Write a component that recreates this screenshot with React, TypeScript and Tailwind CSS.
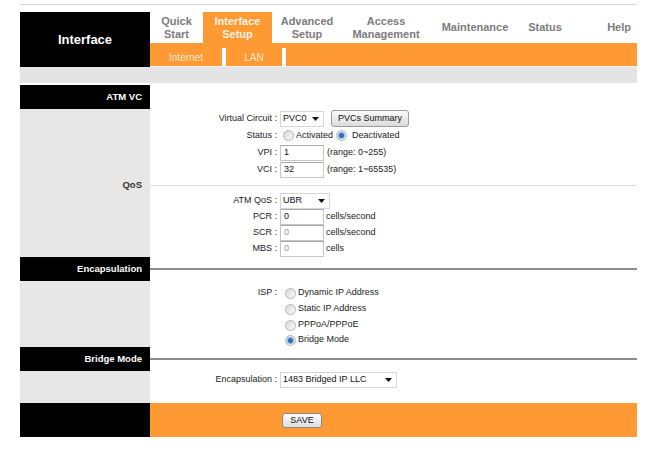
import React from 'react'

const font = "font-['Liberation_Sans',Arial,sans-serif]"

function Arrow() {
    return (
        <svg width="7" height="4" viewBox="0 0 7 4" className="shrink-0">
            <path d="M0 0 L7 0 L3.5 4 Z" fill="#111" />
        </svg>
    )
}

function Select({ value, width }: { value: string; width: string }) {
    return (
        <div className={`flex items-center justify-between h-[16px] ${width} border border-[#d6d6d6] bg-white pl-[2px] pr-[4px] text-[#111]`}>
            <span>{value}</span>
            <Arrow />
        </div>
    )
}

function Input({ value, muted }: { value: string; muted?: boolean }) {
    return (
        <div className={`flex items-center h-[16px] w-[44px] border border-[#c6c6c6] border-t-[#a8a8a8] bg-white pl-[3px] ${muted ? 'text-[#9a9a9a]' : 'text-[#111]'}`}>
            {value}
        </div>
    )
}

function Radio({ checked }: { checked?: boolean }) {
    return (
        <span className="flex items-center justify-center w-[11px] h-[11px] rounded-full border border-[#b4b4b4] bg-gradient-to-br from-[#d8d8d8] to-[#fafafa] shrink-0">
            {checked && <span className="w-[5px] h-[5px] rounded-full bg-[#2f6fc0] ring-1 ring-[#8fb6e6]" />}
        </span>
    )
}

function Label({ children }: { children: React.ReactNode }) {
    return <div className="w-[127px] text-right text-[#222] mr-[3px]">{children}</div>
}

function Row({ h, children }: { h: string; children: React.ReactNode }) {
    return <div className={`flex items-center ${h}`}>{children}</div>
}

function SectionHead({ title, line }: { title: string; line?: boolean }) {
    return (
        <div className="flex h-[24px]">
            <div className="w-[130px] bg-black text-white font-bold text-[9.5px] flex items-center justify-end pr-[8px]">
                {title}
            </div>
            <div className="flex-1 flex items-center">
                {line && <div className="w-full h-[2px] bg-[#8c8c8c]" />}
            </div>
        </div>
    )
}

const tabs = [
    { w: 'w-[53px]', label: ['Quick', 'Start'] },
    { w: 'w-[69px]', label: ['Interface', 'Setup'], active: true },
    { w: 'w-[70px]', label: ['Advanced', 'Setup'] },
    { w: 'w-[88px]', label: ['Access', 'Management'] },
    { w: 'w-[90px]', label: ['Maintenance'] },
    { w: 'w-[50px]', label: ['Status'] },
]

export default function App() {
    return (
        <div className={`${font} w-[659px] h-[450px] bg-white text-[9px] overflow-hidden`}>
            <div className="ml-[20px] w-[617px]">

                {/* top rule */}
                <div className="mt-[4px] h-px bg-[#d4d4d4]" />

                {/* header */}
                <div className="flex h-[55px] mt-[7px]">
                    <div className="w-[130px] bg-black text-white font-bold text-[13px] flex items-center justify-center">
                        Interface
                    </div>
                    <div className="flex-1 flex flex-col">
                        <div className="flex h-[31px]">
                            {tabs.map((t) => (
                                <div
                                    key={t.label.join(' ')}
                                    className={`${t.w} flex flex-col items-center justify-center text-center leading-[13px] font-bold text-[11px] ${t.active ? 'bg-[#ff9933] text-[#fff3e6]' : 'text-[#7c7c7c]'}`}
                                >
                                    {t.label.map((l) => (
                                        <span key={l}>{l}</span>
                                    ))}
                                </div>
                            ))}
                            <div className="flex-1 flex items-center justify-end pr-[6px] font-bold text-[11px] text-[#7c7c7c]">
                                Help
                            </div>
                        </div>
                        <div className="flex items-end h-[23px] bg-[#ff9933] text-[10px] text-[#ffe8d0]">
                            <div className="w-[72px] h-[18px] flex items-center justify-center">Internet</div>
                            <div className="w-[4px] h-[18px] bg-white" />
                            <div className="w-[56px] h-[18px] flex items-center justify-center">LAN</div>
                            <div className="w-[4px] h-[18px] bg-white" />
                        </div>
                        <div className="h-px bg-[#f4f4f4]" />
                    </div>
                </div>

                {/* grey band */}
                <div className="h-[16px] bg-[#e4e4e4]" />

                <div className="mt-[2px]">
                    <SectionHead title="ATM VC" />

                    {/* ATM VC fields */}
                    <div className="flex">
                        <div className="w-[130px] bg-[#e7e7e7]" />
                        <div className="flex-1 pt-[1px]">
                            <Row h="h-[17px]">
                                <Label>Virtual Circuit :</Label>
                                <Select value="PVC0" width="w-[44px]" />
                                <div className="ml-[7px] h-[17px] w-[78px] flex items-center justify-center rounded-[3px] border border-[#9c9c9c] bg-gradient-to-b from-[#fbfbfb] to-[#dcdcdc] text-[#111]">
                                    PVCs Summary
                                </div>
                            </Row>
                            <Row h="h-[17px]">
                                <Label>Status :</Label>
                                <div className="flex items-center ml-[3px]">
                                    <Radio />
                                    <span className="ml-[2px] text-[#222]">Activated</span>
                                    <span className="ml-[3px]"><Radio checked /></span>
                                    <span className="ml-[5px] text-[#222]">Deactivated</span>
                                </div>
                            </Row>
                            <Row h="h-[17px]">
                                <Label>VPI :</Label>
                                <Input value="1" />
                                <span className="ml-[3px] text-[#222]">(range: 0~255)</span>
                            </Row>
                            <Row h="h-[17px]">
                                <Label>VCI :</Label>
                                <Input value="32" />
                                <span className="ml-[3px] text-[#222]">(range: 1~65535)</span>
                            </Row>
                        </div>
                    </div>

                    {/* QoS */}
                    <div className="flex h-[14px]">
                        <div className="w-[130px] bg-[#e7e7e7] flex items-center justify-end pr-[8px] font-bold text-[9.5px] text-[#333]">
                            QoS
                        </div>
                        <div className="flex-1 flex items-center">
                            <div className="w-full h-px bg-[#dddddd]" />
                        </div>
                    </div>
                    <div className="flex">
                        <div className="w-[130px] bg-[#e7e7e7]" />
                        <div className="flex-1 pt-[1px]">
                            <Row h="h-[16px]">
                                <Label>ATM QoS :</Label>
                                <Select value="UBR" width="w-[50px]" />
                            </Row>
                            <Row h="h-[16px]">
                                <Label>PCR :</Label>
                                <Input value="0" />
                                <span className="ml-[2px] text-[#222]">cells/second</span>
                            </Row>
                            <Row h="h-[16px]">
                                <Label>SCR :</Label>
                                <Input value="0" muted />
                                <span className="ml-[2px] text-[#222]">cells/second</span>
                            </Row>
                            <Row h="h-[16px]">
                                <Label>MBS :</Label>
                                <Input value="0" muted />
                                <span className="ml-[2px] text-[#222]">cells</span>
                            </Row>
                        </div>
                    </div>

                    <SectionHead title="Encapsulation" line />

                    {/* ISP */}
                    <div className="flex">
                        <div className="w-[130px] bg-[#e7e7e7]" />
                        <div className="flex-1 pt-[4px]">
                            {[
                                { l: 'Dynamic IP Address' },
                                { l: 'Static IP Address' },
                                { l: 'PPPoA/PPPoE' },
                                { l: 'Bridge Mode', c: true },
                            ].map((o, i) => (
                                <Row key={o.l} h={i === 3 ? 'h-[14px]' : 'h-[16px]'}>
                                    <Label>{i === 0 ? 'ISP :' : ''}</Label>
                                    <div className="flex items-center ml-[5px]">
                                        <Radio checked={o.c} />
                                        <span className="ml-[2px] text-[#222]">{o.l}</span>
                                    </div>
                                </Row>
                            ))}
                        </div>
                    </div>

                    <SectionHead title="Bridge Mode" line />

                    <div className="flex h-[32px]">
                        <div className="w-[130px] bg-[#e7e7e7]" />
                        <div className="flex-1 pt-[1px]">
                            <Row h="h-[16px]">
                                <Label>Encapsulation :</Label>
                                <Select value="1483 Bridged IP LLC" width="w-[117px]" />
                            </Row>
                        </div>
                    </div>

                    {/* footer */}
                    <div className="flex h-[34px]">
                        <div className="w-[130px] bg-black" />
                        <div className="flex-1 bg-[#ff9933] pt-[10px] pl-[132px]">
                            <div className="h-[15px] w-[40px] flex items-center justify-center rounded-[3px] border border-[#8a8a8a] bg-gradient-to-b from-[#fdfdfd] to-[#dedede] text-[#111]">
                                SAVE
                            </div>
                        </div>
                    </div>
                </div>
            </div>
        </div>
    )
}
